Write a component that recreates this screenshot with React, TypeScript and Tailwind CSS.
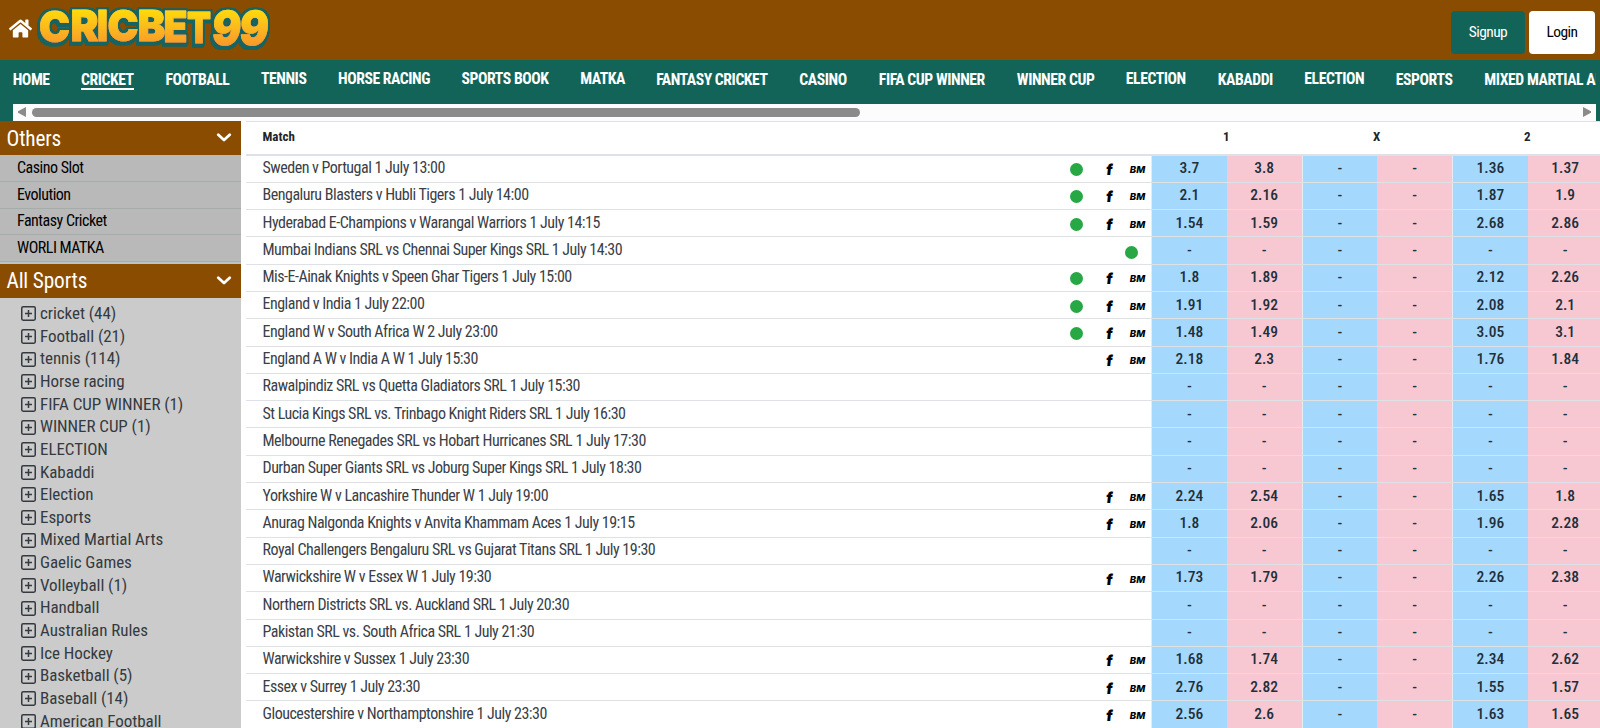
import { FaHome } from "react-icons/fa";

const NAV: [string, string, boolean][] = [
  ["HOME", "w-[68.3px]", false],
  ["CRICKET", "w-[84.5px]", false],
  ["FOOTBALL", "w-[95.5px]", false],
  ["TENNIS", "w-[77px]", true],
  ["HORSE RACING", "w-[123.5px]", true],
  ["SPORTS BOOK", "w-[118.7px]", true],
  ["MATKA", "w-[76px]", true],
  ["FANTASY CRICKET", "w-[143.2px]", false],
  ["CASINO", "w-[79.5px]", false],
  ["FIFA CUP WINNER", "w-[138px]", false],
  ["WINNER CUP", "w-[109px]", false],
  ["ELECTION", "w-[92px]", true],
  ["KABADDI", "w-[86.5px]", false],
  ["ELECTION", "w-[91.5px]", true],
  ["ESPORTS", "w-[88.5px]", false],
  ["MIXED MARTIAL ARTS", "w-[160px]", false],
];

const OTHERS = ["Casino Slot", "Evolution", "Fantasy Cricket", "WORLI MATKA"];

const SPORTS = [
  "cricket (44)", "Football (21)", "tennis (114)", "Horse racing", "FIFA CUP WINNER (1)",
  "WINNER CUP (1)", "ELECTION", "Kabaddi", "Election", "Esports", "Mixed Martial Arts",
  "Gaelic Games", "Volleyball (1)", "Handball", "Australian Rules", "Ice Hockey",
  "Basketball (5)", "Baseball (14)", "American Football",
];

type Flags = "live" | "fancy" | "dot" | "none";
const MATCHES: [string, Flags, string[]][] = [
  ["Sweden v Portugal 1 July 13:00", "live", ["3.7", "3.8", "1.36", "1.37"]],
  ["Bengaluru Blasters v Hubli Tigers 1 July 14:00", "live", ["2.1", "2.16", "1.87", "1.9"]],
  ["Hyderabad E-Champions v Warangal Warriors 1 July 14:15", "live", ["1.54", "1.59", "2.68", "2.86"]],
  ["Mumbai Indians SRL vs Chennai Super Kings SRL 1 July 14:30", "dot", []],
  ["Mis-E-Ainak Knights v Speen Ghar Tigers 1 July 15:00", "live", ["1.8", "1.89", "2.12", "2.26"]],
  ["England v India 1 July 22:00", "live", ["1.91", "1.92", "2.08", "2.1"]],
  ["England W v South Africa W 2 July 23:00", "live", ["1.48", "1.49", "3.05", "3.1"]],
  ["England A W v India A W 1 July 15:30", "fancy", ["2.18", "2.3", "1.76", "1.84"]],
  ["Rawalpindiz SRL vs Quetta Gladiators SRL 1 July 15:30", "none", []],
  ["St Lucia Kings SRL vs. Trinbago Knight Riders SRL 1 July 16:30", "none", []],
  ["Melbourne Renegades SRL vs Hobart Hurricanes SRL 1 July 17:30", "none", []],
  ["Durban Super Giants SRL vs Joburg Super Kings SRL 1 July 18:30", "none", []],
  ["Yorkshire W v Lancashire Thunder W 1 July 19:00", "fancy", ["2.24", "2.54", "1.65", "1.8"]],
  ["Anurag Nalgonda Knights v Anvita Khammam Aces 1 July 19:15", "fancy", ["1.8", "2.06", "1.96", "2.28"]],
  ["Royal Challengers Bengaluru SRL vs Gujarat Titans SRL 1 July 19:30", "none", []],
  ["Warwickshire W v Essex W 1 July 19:30", "fancy", ["1.73", "1.79", "2.26", "2.38"]],
  ["Northern Districts SRL vs. Auckland SRL 1 July 20:30", "none", []],
  ["Pakistan SRL vs. South Africa SRL 1 July 21:30", "none", []],
  ["Warwickshire v Sussex 1 July 23:30", "fancy", ["1.68", "1.74", "2.34", "2.62"]],
  ["Essex v Surrey 1 July 23:30", "fancy", ["2.76", "2.82", "1.55", "1.57"]],
  ["Gloucestershire v Northamptonshire 1 July 23:30", "fancy", ["2.56", "2.6", "1.63", "1.65"]],
];

const GLYPHS: [string, number, number, number, number][] = [
  ["C", 39, 41.5, 31, 43],
  ["R", 70.5, 41, 28, 43],
  ["I", 97, 40.5, 11, 43],
  ["C", 107.5, 40.5, 31, 43],
  ["B", 137.5, 41, 28, 43],
  ["E", 163.5, 42, 24, 43],
  ["T", 187, 43, 24, 43],
];

function Logo() {
  return (
    <svg width="280" height="59" viewBox="0 0 280 59" className="absolute left-0 top-0">
      <defs>
        <linearGradient id="gold" gradientUnits="userSpaceOnUse" x1="0" y1="9" x2="0" y2="45">
          <stop offset="0" stopColor="#ffdc0c" />
          <stop offset="1" stopColor="#f9992b" />
        </linearGradient>
        <filter id="rim" filterUnits="userSpaceOnUse" x="30" y="0" width="250" height="59">
          <feMorphology in="SourceAlpha" operator="dilate" radius="2" result="grown" />
          <feOffset in="grown" dx="-1" dy="1.6" result="low" />
          <feMerge result="both">
            <feMergeNode in="grown" />
            <feMergeNode in="low" />
          </feMerge>
          <feGaussianBlur in="both" stdDeviation="0.5" result="soft" />
          <feFlood floodColor="#156460" />
          <feComposite in2="soft" operator="in" result="rimmed" />
          <feMerge>
            <feMergeNode in="rimmed" />
            <feMergeNode in="rimmed" />
            <feMergeNode in="SourceGraphic" />
          </feMerge>
        </filter>
      </defs>
      <g className="font-[Inter] font-black" fill="url(#gold)" stroke="url(#gold)" strokeWidth="0.8" strokeLinejoin="round" filter="url(#rim)" colorInterpolationFilters="sRGB">
        {GLYPHS.map(([c, x, y, w, size]) => (
          <text key={x} x={x} y={y} fontSize={size} textLength={w} lengthAdjust="spacingAndGlyphs">{c}</text>
        ))}
        <g transform="skewX(-5)">
          <text x="215" y="44.5" fontSize="47" textLength="29" lengthAdjust="spacingAndGlyphs">9</text>
          <text x="242.5" y="44.5" fontSize="47" textLength="29" lengthAdjust="spacingAndGlyphs">9</text>
        </g>
      </g>
    </svg>
  );
}

function Chevron() {
  return (
    <svg width="16" height="10" viewBox="0 0 16 10" fill="none" stroke="#fff" strokeWidth="2.8" strokeLinecap="round" strokeLinejoin="round">
      <path d="M2.3 1.8 8 7 13.7 1.8" />
    </svg>
  );
}

function PlusBox() {
  return (
    <svg width="15" height="15" viewBox="0 0 15 15" fill="none" stroke="#343a40" strokeWidth="1.5" className="shrink-0">
      <rect x="0.75" y="0.75" width="13.5" height="13.5" rx="1.4" />
      <path d="M7.5 4v7M4 7.5h7" />
    </svg>
  );
}

function SideTitle({ text }: { text: string }) {
  return (
    <div className="flex h-[34px] items-center justify-between bg-[#8a4d00] pl-[6.5px] pr-[9px] text-[21.3px] font-[450] tracking-[-0.15px] text-white">
      <span className="pt-px">{text}</span>
      <Chevron />
    </div>
  );
}

function Dot() {
  return <i className="block size-[13px] rounded-full bg-[#28a745]" />;
}

function Badges({ flags }: { flags: Flags }) {
  if (flags === "none") return null;
  if (flags === "dot") return <div className="flex pr-[13px] pt-[3px]"><Dot /></div>;
  return (
    <div className="flex items-center pr-[5px] pt-[2px]">
      {flags === "live" && <Dot />}
      <span className="ml-[20px] w-[13px] -skew-x-6 pt-px text-center font-[Inter] text-[15px] leading-[18px] font-black text-black [font-stretch:100%]">f</span>
      <span className="ml-[13px] w-[17px] pt-px text-center font-[Inter] text-[9.5px] leading-[18px] font-extrabold italic text-black [font-stretch:100%]">BM</span>
    </div>
  );
}

function Pair({ back, lay }: { back: string; lay: string }) {
  return (
    <div className="flex w-[150.5px] shrink-0 border-l border-[#e4ebf1] text-center text-[15.5px] font-medium text-[#212f3a]">
      <span className="flex flex-1 items-center justify-center bg-[#a5d8fd]">{back}</span>
      <span className="flex flex-1 items-center justify-center bg-[#f8c8d2]">{lay}</span>
    </div>
  );
}

export default function App() {
  return (
    <div className="flex h-[728px] w-[1600px] flex-col overflow-hidden bg-white font-['Roboto_Condensed',Roboto,sans-serif] [font-stretch:75%]">
      <header className="relative flex h-[59.5px] shrink-0 items-start justify-between bg-[#8a4d00]">
        <FaHome className="mt-[17px] ml-[8.5px] size-[23px] text-white" />
        <Logo />
        <div className="flex gap-[4px] pt-[11px] pr-[5px] text-[15.5px] tracking-[-0.6px]">
          <button className="h-[43px] w-[74px] rounded-[4px] bg-[#126458] pt-px text-white">Signup</button>
          <button className="h-[43px] w-[66px] rounded-[4px] bg-white text-black">Login</button>
        </div>
      </header>

      <nav className="flex h-[61px] shrink-0 flex-col overflow-hidden bg-[#126458] pr-[4px] pl-[12.7px]">
        <ul className="flex h-[44.5px] overflow-hidden pt-[7px] text-[15.7px] font-bold tracking-[-0.45px] text-white">
          {NAV.map(([label, width, raised], i) => (
            <li key={i} className={`${width} shrink-0 whitespace-nowrap leading-[24px] ${raised ? "" : "pt-px"}`}>
              <span className={i === 1 ? "inline-block h-[22.5px] border-b-2 border-white" : ""}>{label}</span>
            </li>
          ))}
        </ul>
        <div className="flex h-[16.5px] items-center justify-between bg-[#fcfcfc] px-[5px]">
          <svg width="8" height="10" viewBox="0 0 8 10" fill="#8b8b8b"><path d="M8 0v10L0 5.8V4.2Z" /></svg>
          <div className="mr-auto ml-[6px] h-[9px] w-[828px] rounded-full bg-[#8b8b8b]" />
          <svg width="8" height="10" viewBox="0 0 8 10" fill="#8b8b8b"><path d="M0 0v10L8 5.8V4.2Z" /></svg>
        </div>
      </nav>

      <div className="flex min-h-0 flex-1">
        <aside className="w-[241px] shrink-0 overflow-hidden bg-[#cbcbcb]">
          <div className="h-[0.5px] bg-white" />
          <SideTitle text="Others" />
          <ul className="bg-[#b9b9b9] text-[16px] tracking-[-0.5px] text-black">
            {OTHERS.map((o) => (
              <li key={o} className="flex h-[26.75px] items-center border-b border-[#a4acac] pl-[17px]">{o}</li>
            ))}
          </ul>
          <div className="h-[1.5px] bg-[#b9c4cc]" />
          <SideTitle text="All Sports" />
          <ul className="pt-[5px] text-[17px] tracking-[-0.05px] text-[#343a40]">
            {SPORTS.map((s) => (
              <li key={s} className="flex h-[22.65px] items-center gap-[4px] pl-[21px] whitespace-nowrap">
                <PlusBox />
                <span>{s}</span>
              </li>
            ))}
          </ul>
        </aside>

        <main className="ml-[5px] flex-1 overflow-hidden border-t border-[#dee2e6]">
          <div className="flex h-[34px] items-center border-b-2 border-[#dee2e6] pb-px text-[13px] font-bold text-[#212529]">
            <span className="flex-1 pl-[16.5px]">Match</span>
            <span className="w-[150.5px] shrink-0 text-center">1</span>
            <span className="w-[150.5px] shrink-0 text-center">X</span>
            <span className="mr-[-2.5px] w-[150.5px] shrink-0 text-center">2</span>
          </div>
          {MATCHES.map(([name, flags, o]) => (
            <div key={name} className="flex h-[27.3px] border-b border-[#dee2e6]">
              <div className="flex flex-1 items-center justify-between pl-[16.5px]">
                <span className="pb-[1.3px] text-[16px] tracking-[-0.5px] whitespace-nowrap text-[#3a4047]">{name}</span>
                <Badges flags={flags} />
              </div>
              <Pair back={o[0] ?? "-"} lay={o[1] ?? "-"} />
              <Pair back="-" lay="-" />
              <div className="mr-[-2.5px] flex">
                <Pair back={o[2] ?? "-"} lay={o[3] ?? "-"} />
              </div>
            </div>
          ))}
        </main>
      </div>
    </div>
  );
}
